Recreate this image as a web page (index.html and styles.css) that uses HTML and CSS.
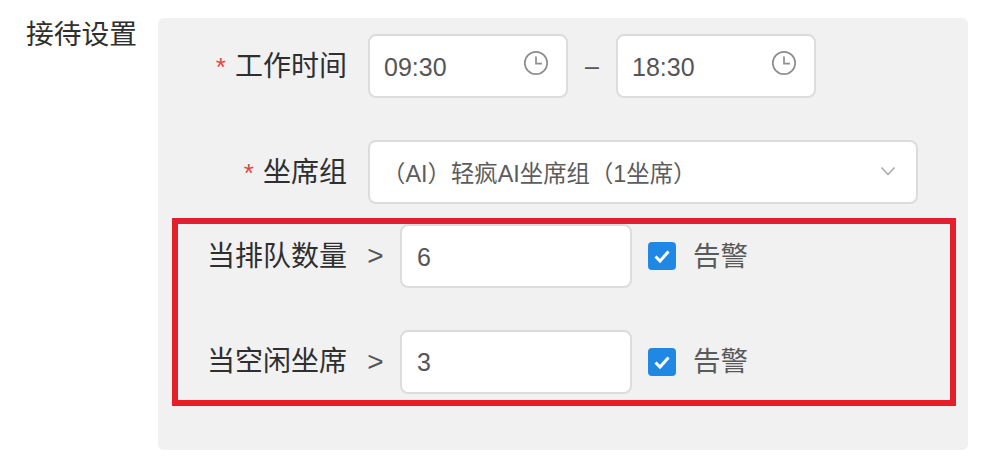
FILE: index.html
```html
<!DOCTYPE html>
<html lang="zh-CN">
<head>
<meta charset="utf-8">
<title>接待设置</title>
<link rel="stylesheet" href="styles.css">
</head>
<body>
<div class="page">
  <div class="section-label">接待设置</div>
  <div class="panel">
    <div class="row">
      <div class="label"><span class="star">*</span>工作时间</div>
      <div class="field time">
        <span class="value">09:30</span>
        <svg class="clock" viewBox="0 0 26 26" aria-hidden="true"><circle cx="13" cy="13" r="11.2"/><path d="M13 6.5V13.6H19"/></svg>
      </div>
      <span class="dash">–</span>
      <div class="field time">
        <span class="value">18:30</span>
        <svg class="clock" viewBox="0 0 26 26" aria-hidden="true"><circle cx="13" cy="13" r="11.2"/><path d="M13 6.5V13.6H19"/></svg>
      </div>
    </div>
    <div class="row">
      <div class="label"><span class="star">*</span>坐席组</div>
      <div class="field select">
        <span class="value select-text">（AI）轻疯AI坐席组（1坐席）</span>
        <svg class="chevron" viewBox="0 0 16 10" aria-hidden="true"><path d="M1.5 1.5L8 8.5L14.5 1.5"/></svg>
      </div>
    </div>
    <div class="alert-box">
      <div class="alert-row">
        <div class="alert-label">当排队数量</div>
        <span class="gt">&gt;</span>
        <div class="field number"><span class="value">6</span></div>
        <span class="checkbox"><svg viewBox="0 0 28 28" aria-hidden="true"><path d="M7.5 14.5L12 19L20.5 9.5"/></svg></span>
        <span class="alarm">告警</span>
      </div>
      <div class="alert-row">
        <div class="alert-label">当空闲坐席</div>
        <span class="gt">&gt;</span>
        <div class="field number"><span class="value">3</span></div>
        <span class="checkbox"><svg viewBox="0 0 28 28" aria-hidden="true"><path d="M7.5 14.5L12 19L20.5 9.5"/></svg></span>
        <span class="alarm">告警</span>
      </div>
    </div>
  </div>
</div>
</body>
</html>
```
FILE: styles.css
```css
* { box-sizing: border-box; }
html, body { margin: 0; padding: 0; background: #fff; }
body {
  width: 1004px;
  height: 462px;
  overflow: hidden;
  font-family: "Liberation Sans", "Noto Sans CJK SC", sans-serif;
  color: #333;
}
.page {
  display: flex;
  align-items: flex-start;
  padding: 18px 36px 0 26px;
}
.section-label {
  width: 132px;
  flex: none;
  font-size: 27.75px;
  line-height: 34px;
  color: #2f2f2f;
}
.panel {
  width: 810px;
  height: 432px;
  flex: none;
  padding-top: 16px;
  background: #f1f1f2;
  border-radius: 6px;
  display: flex;
  flex-direction: column;
}
.row {
  display: flex;
  align-items: center;
  height: 64px;
  margin-bottom: 42px;
}
.row + .row { margin-bottom: 14px; }
.label {
  width: 189px;
  margin-right: 21px;
  padding-top: 2px;
  text-align: right;
  font-size: 28px;
  line-height: 34px;
  color: #2f2f2f;
  white-space: nowrap;
}
.star {
  color: #e2443f;
  font-size: 26px;
  margin-right: 9px;
  font-family: "Liberation Sans", sans-serif;
}
.field {
  display: flex;
  align-items: center;
  height: 64px;
  background: #fff;
  border: 2px solid #dcdcdc;
  border-radius: 8px;
}
.value {
  font-size: 25px;
  color: #555;
  padding-top: 2px;
}
.time {
  width: 200px;
  padding: 0 17px 0 14px;
  justify-content: space-between;
}
.clock {
  width: 26px;
  height: 26px;
  margin-top: -6px;
  fill: none;
  stroke: #8e8e8e;
  stroke-width: 1.7;
}
.dash {
  width: 48px;
  text-align: center;
  font-size: 25px;
  color: #555;
}
.select {
  width: 550px;
  padding: 0 20px 0 14px;
  justify-content: space-between;
}
.select-text {
  font-size: 23.4px;
  margin-left: -2px;
  padding-top: 0;
  color: #5c5c5c;
}
.chevron {
  width: 16px;
  height: 10px;
  margin-top: -2px;
  fill: none;
  stroke: #a6a6a6;
  stroke-width: 1.5;
}
.alert-box {
  width: 784px;
  height: 188px;
  margin-left: 14px;
  border: 6px solid #e41e2b;
  display: flex;
  flex-direction: column;
  gap: 42px;
}
.alert-row {
  display: flex;
  align-items: center;
  height: 64px;
}
.alert-label {
  width: 169px;
  padding-top: 2px;
  text-align: right;
  font-size: 28px;
  line-height: 34px;
  color: #2f2f2f;
  white-space: nowrap;
}
.alert-row + .alert-row .alert-label,
.alert-row + .alert-row .alarm { padding-top: 0; }
.gt {
  width: 53px;
  padding-left: 4px;
  text-align: center;
  font-size: 28px;
  color: #555;
}
.number {
  width: 232px;
  padding-left: 15px;
}
.alert-row + .alert-row .value { padding-top: 0; }
.checkbox {
  width: 28px;
  height: 28px;
  margin-left: 16px;
  background: #1f88e5;
  border-radius: 4px;
  flex: none;
}
.checkbox svg {
  display: block;
  width: 28px;
  height: 28px;
  fill: none;
  stroke: #fff;
  stroke-width: 3;
}
.alarm {
  margin-left: 17px;
  padding-top: 2px;
  font-size: 27.5px;
  line-height: 34px;
  color: #5a5a5a;
}
```
